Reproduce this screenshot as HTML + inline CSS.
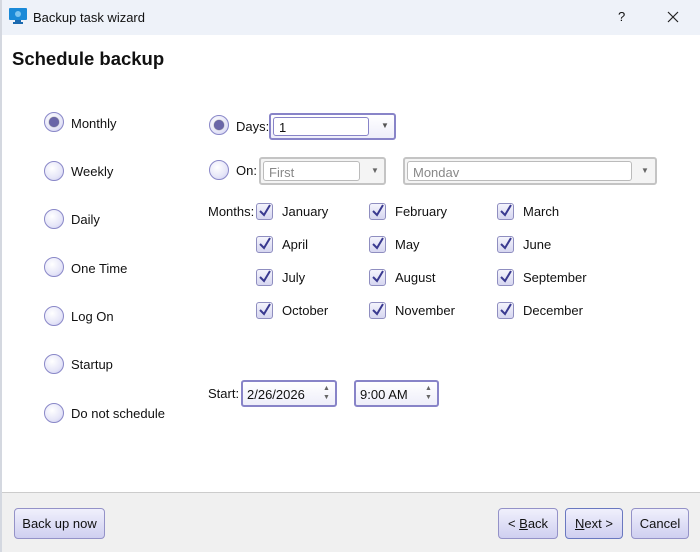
<!DOCTYPE html>
<html><head><meta charset="utf-8"><style>
*{box-sizing:border-box}
body{margin:0;width:700px;height:552px;overflow:hidden;background:#fff;font-family:"Liberation Sans",sans-serif;font-size:13px;color:#111;position:relative}
.a{position:absolute;white-space:nowrap}
.rad{position:absolute;width:20px;height:20px;border-radius:50%;border:1.5px solid #8a88c8;background:radial-gradient(circle at 40% 35%,#fff 0%,#e6e6f8 60%,#c8c8ee 100%)}
.rad.on::after{content:"";position:absolute;left:3.5px;top:3.5px;width:10px;height:10px;border-radius:50%;background:#6a66a8;box-shadow:0 0 1px #333}
.cb{position:absolute;width:17px;height:17px;border:1.5px solid #8f8ec0;border-radius:3px;background:linear-gradient(#f4f4fc,#d6d6f0)}
.cb svg{position:absolute;left:1px;top:0}
.box{position:absolute;border:2px solid #8884c8;border-radius:3px;background:linear-gradient(#fff,#eeeefa)}
.gbox{position:absolute;border:2px solid #c4c4c4;border-radius:3px;background:#f4f4f4}
.inner{position:absolute;border:1px solid #aaa;border-radius:3px;background:#fff}
.btn{position:absolute;border:1.5px solid #9492c8;border-radius:4px;background:linear-gradient(#f0f0fc,#cfcff0);text-align:center;line-height:29px;font-size:13px}
</style></head><body>
<div class="a" style="left:0;top:0;width:700px;height:35px;background:#eef2f9"></div>
<div class="a" style="left:0;top:0;width:2px;height:552px;background:#d4d8e0"></div>
<svg class="a" style="left:9px;top:8px" width="18" height="16"><rect x="0" y="0" width="18" height="12" rx="1" fill="#1a8ad8"/><circle cx="9" cy="6" r="3" fill="#7cc4f0"/><rect x="6" y="12" width="6" height="2" fill="#1a6ab0"/><rect x="4" y="14" width="10" height="2" fill="#1a6ab0"/></svg>
<div class="a" style="left:33px;top:10px;font-size:13px">Backup task wizard</div>
<div class="a" style="left:618px;top:9px;font-size:13px">?</div>
<svg class="a" style="left:667px;top:11px" width="12" height="12"><path d="M1 1L11 11M11 1L1 11" stroke="#222" stroke-width="1.2"/></svg>
<div class="a" style="left:12px;top:48px;font-weight:bold;font-size:18.5px">Schedule backup</div>

<div class="rad on" style="left:44px;top:112px"></div><div class="a" style="left:71px;top:116px">Monthly</div>
<div class="rad" style="left:44px;top:161px"></div><div class="a" style="left:71px;top:164px">Weekly</div>
<div class="rad" style="left:44px;top:209px"></div><div class="a" style="left:71px;top:212px">Daily</div>
<div class="rad" style="left:44px;top:257px"></div><div class="a" style="left:71px;top:261px">One Time</div>
<div class="rad" style="left:44px;top:306px"></div><div class="a" style="left:71px;top:309px">Log On</div>
<div class="rad" style="left:44px;top:354px"></div><div class="a" style="left:71px;top:357px">Startup</div>
<div class="rad" style="left:44px;top:403px"></div><div class="a" style="left:71px;top:406px">Do not schedule</div>

<div class="rad on" style="left:209px;top:115px"></div><div class="a" style="left:236px;top:119px">Days:</div>
<div class="box" style="left:269px;top:113px;width:127px;height:27px"><div class="inner" style="left:2px;top:2px;width:96px;height:19px;border-color:#8884c8"></div><div class="a" style="left:8px;top:5px">1</div><div class="a" style="left:110px;top:6px;font-size:8px;color:#555">▼</div></div>
<div class="rad" style="left:209px;top:160px"></div><div class="a" style="left:236px;top:163px">On:</div>
<div class="gbox" style="left:259px;top:157px;width:127px;height:28px"><div class="inner" style="left:2px;top:2px;width:97px;height:20px;border-color:#bbb"></div><div class="a" style="left:8px;top:6px;color:#888">First</div><div class="a" style="left:110px;top:7px;font-size:8px;color:#666">▼</div></div>
<div class="gbox" style="left:403px;top:157px;width:254px;height:28px"><div class="inner" style="left:2px;top:2px;width:225px;height:20px;border-color:#bbb"></div><div class="a" style="left:8px;top:6px;color:#888">Mondav</div><div class="a" style="left:236px;top:7px;font-size:8px;color:#666">▼</div></div>

<div class="a" style="left:208px;top:204px">Months:</div>
<div id="cbs"></div>
<div class="a" style="left:208px;top:386px">Start:</div>
<div class="box" style="left:241px;top:380px;width:96px;height:27px"><div class="a" style="left:4px;top:5px">2/26/2026</div><div class="a" style="left:80px;top:2px;font-size:7px;color:#666;line-height:9px">▲<br>▼</div></div>
<div class="box" style="left:354px;top:380px;width:85px;height:27px"><div class="a" style="left:4px;top:5px">9:00 AM</div><div class="a" style="left:69px;top:2px;font-size:7px;color:#666;line-height:9px">▲<br>▼</div></div>

<div class="a" style="left:2px;top:492px;width:698px;height:60px;background:#f0f0f0;border-top:1px solid #ccc"></div>
<div class="btn" style="left:14px;top:508px;width:91px;height:31px">Back up now</div>
<div class="btn" style="left:498px;top:508px;width:60px;height:31px">&lt; <u>B</u>ack</div>
<div class="btn" style="left:565px;top:508px;width:58px;height:31px;border-color:#6a78c0"><u>N</u>ext &gt;</div>
<div class="btn" style="left:631px;top:508px;width:58px;height:31px">Cancel</div>
<script>
var m=[["January","February","March"],["April","May","June"],["July","August","September"],["October","November","December"]],xs=[256,369,497],lx=[282,395,523],h="";
m.forEach(function(r,i){var y=203+i*33;r.forEach(function(n,j){h+='<div class="cb" style="left:'+xs[j]+'px;top:'+y+'px"><svg width="14" height="14"><path d="M2 7L6 11L12 1" fill="none" stroke="#3a3a90" stroke-width="2"/></svg></div><div class="a" style="left:'+lx[j]+'px;top:'+(y+1)+'px">'+n+'</div>'})});
document.getElementById("cbs").innerHTML=h;
</script>
</body></html>
